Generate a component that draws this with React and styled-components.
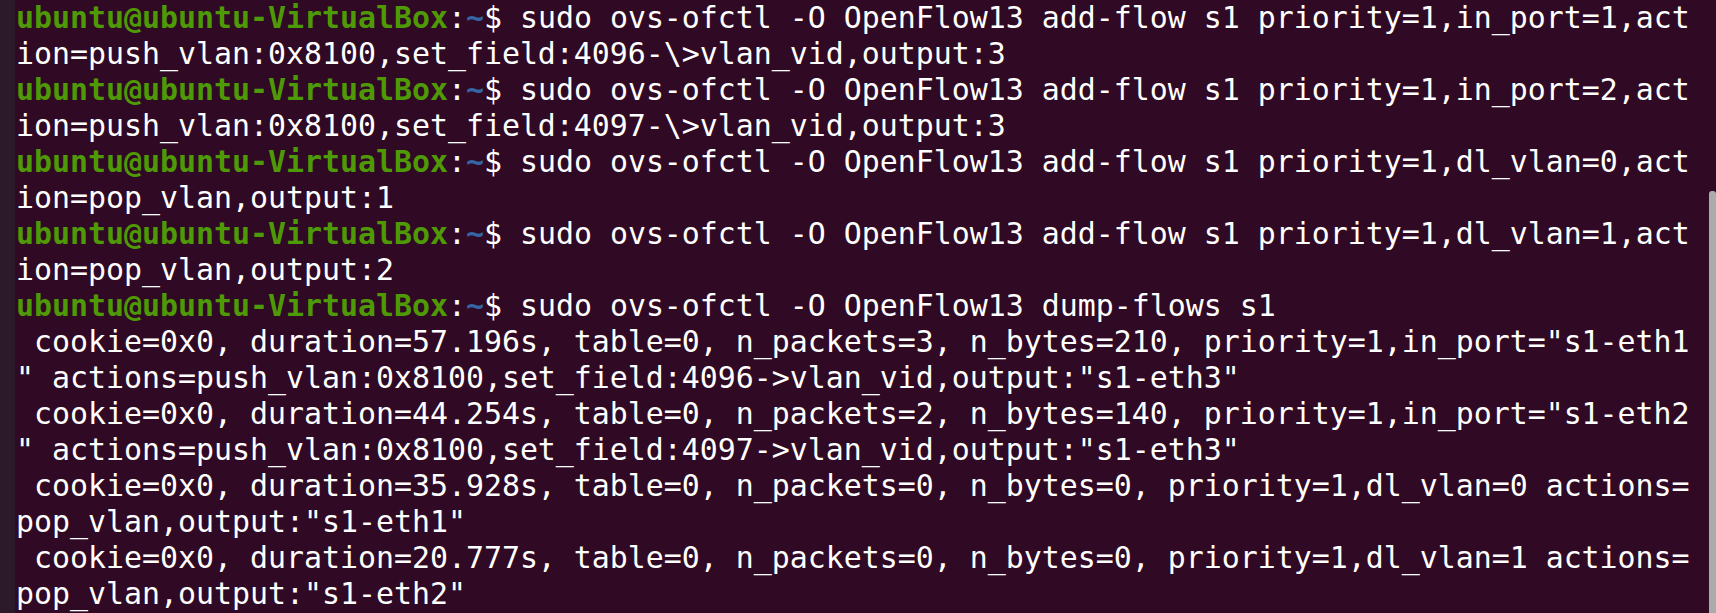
import React from "react";
import styled, { createGlobalStyle } from "styled-components";

const Global = createGlobalStyle`
  html, body { margin: 0; padding: 0; background: #300a24; }
  body { overflow: hidden; }
`;

const Window = styled.div`
  display: flex;
  width: 1716px;
  height: 613px;
  overflow: hidden;
  background: #300a24;
`;

const Gutter = styled.div`
  flex: 0 0 15px;
  background: #2c1a2b;
`;

const Screen = styled.div`
  flex: 1;
  padding-left: 1px;
  overflow: hidden;
`;

const Lines = styled.div`
  font-family: "DejaVu Sans Mono", "Liberation Mono", monospace;
  font-size: 29.9px;
  line-height: 36px;
  color: #ffffff;
  white-space: pre;
`;

const Line = styled.div`
  height: 36px;
`;

const User = styled.span`
  color: #4e9a06;
  font-weight: bold;
`;

const Path = styled.span`
  color: #3465a4;
  font-weight: bold;
`;

const Track = styled.div`
  flex: 0 0 7px;
  display: flex;
  flex-direction: column;
  padding-top: 191px;
`;

const Thumb = styled.div`
  flex: 1;
  background: #ababab;
  border-top-left-radius: 3px;
  border-top-right-radius: 3px;
`;

const Prompt = () => (
  <>
    <User>ubuntu@ubuntu-VirtualBox</User>
    <span>:</span>
    <Path>~</Path>
    <span>$ </span>
  </>
);

const lines = [
  { p: true, t: "sudo ovs-ofctl -O OpenFlow13 add-flow s1 priority=1,in_port=1,act" },
  { t: "ion=push_vlan:0x8100,set_field:4096-\\>vlan_vid,output:3" },
  { p: true, t: "sudo ovs-ofctl -O OpenFlow13 add-flow s1 priority=1,in_port=2,act" },
  { t: "ion=push_vlan:0x8100,set_field:4097-\\>vlan_vid,output:3" },
  { p: true, t: "sudo ovs-ofctl -O OpenFlow13 add-flow s1 priority=1,dl_vlan=0,act" },
  { t: "ion=pop_vlan,output:1" },
  { p: true, t: "sudo ovs-ofctl -O OpenFlow13 add-flow s1 priority=1,dl_vlan=1,act" },
  { t: "ion=pop_vlan,output:2" },
  { p: true, t: "sudo ovs-ofctl -O OpenFlow13 dump-flows s1" },
  { t: ' cookie=0x0, duration=57.196s, table=0, n_packets=3, n_bytes=210, priority=1,in_port="s1-eth1' },
  { t: '" actions=push_vlan:0x8100,set_field:4096->vlan_vid,output:"s1-eth3"' },
  { t: ' cookie=0x0, duration=44.254s, table=0, n_packets=2, n_bytes=140, priority=1,in_port="s1-eth2' },
  { t: '" actions=push_vlan:0x8100,set_field:4097->vlan_vid,output:"s1-eth3"' },
  { t: " cookie=0x0, duration=35.928s, table=0, n_packets=0, n_bytes=0, priority=1,dl_vlan=0 actions=" },
  { t: 'pop_vlan,output:"s1-eth1"' },
  { t: " cookie=0x0, duration=20.777s, table=0, n_packets=0, n_bytes=0, priority=1,dl_vlan=1 actions=" },
  { t: 'pop_vlan,output:"s1-eth2"' },
];

export default function App() {
  return (
    <>
      <Global />
      <Window>
        <Gutter />
        <Screen>
          <Lines>
            {lines.map((l, i) => (
              <Line key={i}>
                {l.p && <Prompt />}
                {l.t}
              </Line>
            ))}
          </Lines>
        </Screen>
        <Track>
          <Thumb />
        </Track>
      </Window>
    </>
  );
}
